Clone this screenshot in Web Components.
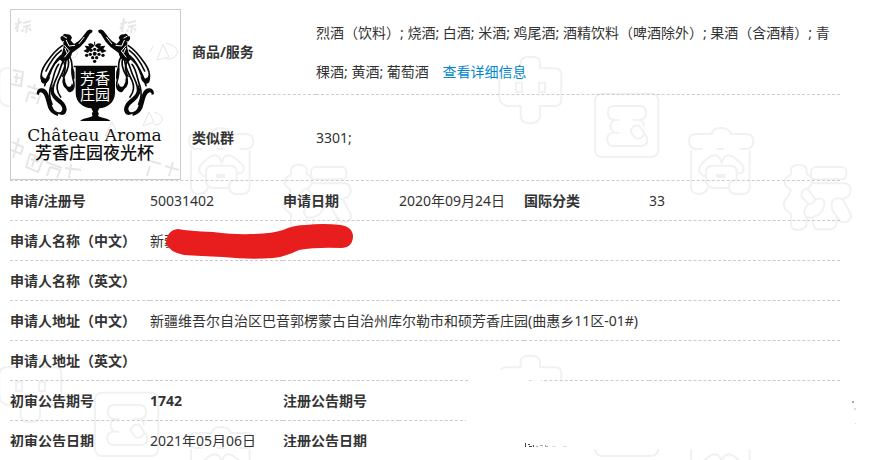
<!DOCTYPE html>
<html lang="zh-CN">
<head>
<meta charset="utf-8">
<title>商标详情</title>
<style>
body{
  margin:0;
  background:#fff;
  color:#333;
  font:14px/39px "Noto Sans","Noto Sans CJK SC",sans-serif;
}
</style>
</head>
<body>
<trademark-page>
  <mark-logo slot="logo"></mark-logo>
  <goods-table slot="goods">
    <span slot="goods">烈酒（饮料）; 烧酒; 白酒; 米酒; 鸡尾酒; 酒精饮料（啤酒除外）; 果酒（含酒精）; 青稞酒; 黄酒; 葡萄酒</span>
    <span slot="group">3301;</span>
  </goods-table>
  <detail-table slot="detail"></detail-table>
</trademark-page>

<script>
// page background: 中国商标 outlines repeated as a tile
window.customElements.define('water-mark', class extends HTMLElement {

  constructor(){
    super(); this.attachShadow({mode:'open'});
  }

  connectedCallback(){
    this.render();
  }

  render(){
    this.shadowRoot.innerHTML = `
    <style>
    :host{ display:block; position:absolute; inset:0; pointer-events:none; }
    svg{ display:block; width:100%; height:100%; }
    </style>
    <svg aria-hidden="true">
      <defs>
        <pattern id="tile" x="-10" y="0" width="500" height="299" patternUnits="userSpaceOnUse">
          <g transform="scale(.33333)" fill="none" stroke="#f1f1f1" stroke-width="6">
            <path d="M150 205H195Q214 205 214 224V300Q214 318 195 318H150V350Q148 370 120 370Q94 370 92 350V318H50Q28 310 28 290V225Q30 205 50 205H92V185Q94 170 120 170Q148 170 150 185Z"/>
            <path d="M78 248H96V276H78ZM147 248H165V276H147Z"/>
            <rect x="315" y="281" width="190" height="190" rx="20"/>
            <path d="M388 360H372Q354 358 354 340Q352 320 370 318H450Q468 318 468 340Q468 358 450 359H428M450 359Q462 365 462 380M370 360Q352 380 372 398H388M368 398Q350 402 352 420Q354 438 370 438H455Q472 435 472 420Q472 405 460 400"/>
            <path d="M430 380Q420 388 424 398L436 414Q446 420 458 410Q464 404 460 394L448 378Q440 374 430 380Z"/>
            <path d="M638 447H615Q597 442 597 424Q597 404 615 402H665Q668 384 693 384Q718 384 722 402H770Q790 404 790 424Q790 444 770 447H748M680 447H703"/>
            <path d="M603 450V560Q603 582 628 582Q650 580 654 562M779 450V560Q779 582 755 582H735Q717 578 717 560Q717 540 740 540"/>
            <path d="M695 490Q690 465 672 466Q655 468 630 498Q622 515 640 528H648M695 490Q700 465 718 466Q735 470 760 498Q764 515 752 520H740M715 564H670Q652 562 648 545V515Q650 497 668 497H722Q740 498 740 515V540M682 525H703V531H682Z"/>
            <path d="M903 525V510Q905 494 926 494Q948 494 950 510V522Q966 528 966 545Q964 560 950 566M903 525Q884 530 884 548Q886 562 902 568Q900 585 885 600Q876 620 890 632L903 642V675Q905 690 926 690Q948 688 950 672V650"/>
            <rect x="963" y="501" width="106" height="37" rx="14"/>
            <path d="M966 550H1065Q1082 552 1082 573Q1080 592 1060 595M940 570Q930 580 936 592L956 612Q972 612 976 598L956 570Q948 564 940 570ZM976 598Q1000 590 1004 608Q1000 635 985 645Q945 665 942 635Q945 620 956 612M968 655Q966 688 985 688H1020Q1038 686 1040 668V648"/>
            <path d="M1030 600Q1020 612 1028 632L1052 665Q1070 672 1082 655Q1086 645 1078 635L1060 600Q1045 590 1030 600Z"/>
          </g>
        </pattern>
      </defs>
      <rect width="100%" height="100%" fill="url(#tile)"/>
    </svg>
    `;
  }

});

window.customElements.define('mark-logo', class extends HTMLElement {

  constructor(){
    super(); this.attachShadow({mode:'open'});
  }

  connectedCallback(){
    this.render();
  }

  render(){
    this.shadowRoot.innerHTML = `
    <style>
    :host{
      display:block;
      position:relative;
      box-sizing:border-box;
      width:171px;
      height:171px;
      border:1px solid #ccc;
      background:#fff;
      color:#111;
      text-align:center;
    }
    .back{ position:absolute; inset:0; width:100%; height:100%; }
    figure{ position:relative; margin:0; padding:15px 2px 0 0; }
    .art{ display:block; margin:0 auto; }
    .name{ font:17px/20px "DejaVu Serif",serif; }
    .cn{ font:500 17px/18px "Liberation Sans","Noto Sans CJK SC",sans-serif; }
    .ink{ font-family:"Liberation Sans","Noto Sans CJK SC",sans-serif; }
    </style>
    <svg class="back" viewBox="0 0 169 169" aria-hidden="true">
      <g fill="none" stroke="#e6e6e6" stroke-width="2">
        <g id="bian">
          <path d="M4 14L11 12M8 8L6 22M7 15L4 19M12 13L20 11M12 17L20 15M16 16L15 23M12 19L11 22M18 18L20 21"/>
        </g>
        <use href="#bian" x="105"/>
        <path d="M2 60L12 62L10 76L0 74M3 67L10 68M6 63L5 73M16 76L32 81M24 74L23 78M18 82L15 92M18 82L29 85L26 94M20 87L25 88M1 132L12 137L10 144L0 140M8 128L2 148M19 144L32 149L27 162L15 157ZM20 149L28 152M24 147L21 157M35 152L51 158M39 157L36 166M39 157L49 160L46 168M54 158L70 160M60 154L58 168M136 150L150 154M139 156L136 166M154 156L168 160M162 152L158 166"/>
        <path d="M152 34L146 50L158 47ZM155 33Q169 37 166 44Q162 50 155 49M142 36L139 42M55 38L49 48M58 36Q68 39 66 45Q64 49 58 47M138 102L132 116L143 112ZM143 102Q153 105 151 111Q148 116 143 114M101 112L94 126L106 122Z" stroke-width="1"/>
      </g>
    </svg>
    <figure>
      <svg class="art" width="130" height="100" viewBox="0 0 130 100" role="img" aria-label="芳香庄园">
        <defs>
          <g id="dancer" stroke="#080808" stroke-linecap="round" stroke-linejoin="round">
            <g stroke="none">
              <path d="M92 43Q90 31 97 34Q101 23 110 28Q122 27 126 38L122 46L132 57Q146 51 154 40L171 18Q178 10 187 16Q189 23 180 26L165 50Q152 66 137 76L126 84Q124 98 112 106L98 112L88 102L97 82Q103 66 100 53Z"/>
              <path d="M32 152Q30 176 43 176Q57 174 61 152Q52 164 44 160Q37 158 36 150Z"/>
              <path d="M99 160Q94 182 108 191Q119 210 128 196Q134 186 126 174Q122 192 111 182Q104 174 105 160Z"/>
              <path d="M124 132Q124 145 128 158Q134 170 134 156Q135 140 128 124Z"/>
              <path d="M20 207Q20 192 33 190Q47 189 54 205Q60 218 64 235Q68 253 80 262Q87 267 84 273Q63 268 55 250Q51 237 47 222Q41 202 32 202Q26 203 27 210Z"/>
              <path d="M68 176Q66 203 86 218Q108 233 110 252Q110 268 96 270Q79 268 74 256Q84 265 93 260Q102 252 91 239Q62 219 60 196Z"/>
            </g>
            <g fill="none" stroke-width="5">
              <path d="M97 62C72 78 60 98 46 118C36 133 32 146 34 160"/>
              <path d="M93 92C74 108 68 124 60 146C54 160 47 170 40 168"/>
              <path d="M94 76C72 92 59 114 48 138"/>
              <path d="M92 98C64 122 52 150 44 182"/>
              <path d="M100 108C92 122 90 138 82 154C74 172 66 184 70 204"/>
              <path d="M108 106C106 130 96 146 86 166C78 184 80 200 92 216"/>
              <path d="M86 118C72 136 72 156 62 184C56 202 58 220 66 238"/>
              <path d="M114 102C120 118 112 136 104 150C100 160 99 172 104 182"/>
              <path d="M120 98C132 118 122 140 128 158C134 176 132 190 126 196"/>
              <path d="M102 112C108 126 106 140 98 154"/>
            </g>
            <g fill="none" stroke="#fff" stroke-width="3">
              <path d="M109 46L117 63L134 61M104 62L118 78L104 96M101 34L110 39M147 56L162 37M91 55L101 50M105 70L111 84"/>
            </g>
          </g>
        </defs>
        <g transform="scale(.33333)" fill="#080808">
          <use href="#dancer"/>
          <use href="#dancer" transform="translate(392 0) scale(-1 1)"/>
          <path d="M131 122H261V127H255V203C255 235 229 248 208 250L203 260Q209 265 204 272C210 278 232 278 242 288H150C160 278 182 278 188 272Q183 265 189 260L184 250C163 248 137 235 137 203V127H131Z"/>
          <path d="M194 66V50M194 62Q182 50 174 58L178 64L164 62L170 72L160 78L174 84L182 72ZM194 62Q206 50 214 58L210 64L226 62L220 72L230 78L216 84L206 72Z"/>
          <g>
            <circle cx="183" cy="76" r="5"/><circle cx="194" cy="73" r="5"/><circle cx="205" cy="76" r="5"/>
            <circle cx="170" cy="91" r="5"/><circle cx="181" cy="88" r="5"/><circle cx="194" cy="86" r="6"/><circle cx="207" cy="88" r="5"/><circle cx="219" cy="91" r="5"/>
            <circle cx="188" cy="98" r="5"/><circle cx="200" cy="98" r="5"/><circle cx="194" cy="109" r="5"/>
          </g>
          <path fill="none" stroke="#080808" stroke-width="3" d="M194 50V60"/>
        </g>
        <g class="ink" font-size="15" fill="#fff" text-anchor="middle">
          <text x="65" y="59">芳香</text>
          <text x="65" y="75">庄园</text>
        </g>
      </svg>
      <div class="name">Château Aroma</div>
      <div class="cn">芳香庄园夜光杯</div>
    </figure>
    `;
  }

});

window.customElements.define('goods-table', class extends HTMLElement {

  constructor(){
    super(); this.attachShadow({mode:'open'});
  }

  connectedCallback(){
    this.render();
  }

  render(){
    this.shadowRoot.innerHTML = `
    <style>
    :host{ display:block; }
    table{ width:100%; border-spacing:0; table-layout:fixed; }
    col:first-child{ width:124px; }
    th,td{ box-sizing:border-box; height:85px; padding:0; text-align:left; vertical-align:middle; }
    tr:first-child > *{ height:86px; border-bottom:1px dashed #ccc; }
    a{ margin-left:10px; color:#08c; text-decoration:none; }
    </style>
    <table>
      <colgroup><col><col></colgroup>
      <tr><th scope="row">商品/服务</th><td><slot name="goods"></slot> <a href="#detail">查看详细信息</a></td></tr>
      <tr><th scope="row">类似群</th><td><slot name="group"></slot></td></tr>
    </table>
    `;
  }

});

window.customElements.define('detail-table', class extends HTMLElement {

  constructor(){
    super(); this.attachShadow({mode:'open'});
    this.rows = [
      ["申请/注册号","50031402","申请日期","2020年09月24日","国际分类","33"],
      ["申请人名称（中文）","新疆","","","",""],
      ["申请人名称（英文）","","","","",""],
      ["申请人地址（中文）","新疆维吾尔自治区巴音郭楞蒙古自治州库尔勒市和硕芳香庄园(曲惠乡11区-01#)","","","",""],
      ["申请人地址（英文）","","","","",""],
      ["初审公告期号","<b>1742</b>","注册公告期号","","",""],
      ["初审公告日期","2021年05月06日","注册公告日期","","",""]
    ];
  }

  connectedCallback(){
    this.render();
  }

  cell(text, i){
    if(i % 2 == 0 && text) return `<th scope="row">${text}</th>`;
    return `<td>${text}</td>`;
  }

  render(){
    this.shadowRoot.innerHTML = `
    <style>
    :host{ display:block; }
    table{ width:100%; border-spacing:0; table-layout:fixed; }
    th,td{
      box-sizing:border-box;
      height:40px;
      padding:0;
      border-bottom:1px dashed #ccc;
      text-align:left;
      white-space:nowrap;
    }
    .a{ width:140px; }
    .b{ width:133px; }
    .c{ width:116px; }
    .d{ width:125px; }
    </style>
    <table>
      <colgroup><col class="a"><col class="b"><col class="c"><col class="d"><col class="d"><col></colgroup>
      ${this.rows.map(r => `<tr>${r.map(this.cell).join("")}</tr>`).join("")}
    </table>
    `;
  }

});

// freehand strokes drawn over the record
window.customElements.define('brush-layer', class extends HTMLElement {

  constructor(){
    super(); this.attachShadow({mode:'open'});
  }

  connectedCallback(){
    this.render();
  }

  render(){
    this.shadowRoot.innerHTML = `
    <style>
    :host{ display:block; position:absolute; left:0; top:0; pointer-events:none; }
    svg{ display:block; }
    </style>
    <svg width="894" height="460" aria-hidden="true">
      <path fill="#fff" d="M469 376Q484 368 506 370L530 381L538 379L545 382H860V449H466L466 400Z"/>
      <path fill="#e81e1e" d="M178 229Q188 231 213 232Q238 235 250 234Q272 234 283 230Q294 225 306 225Q322 223 341 225Q353 227 353 237Q352 248 341 248Q316 247 299 250Q285 257 273 258Q250 260 223 257Q200 256 184 255Q169 252 166 243Q167 230 178 229Z"/>
      <path fill="#444" d="M525 443h1v4h-1zM528 444h2v1h-2zM529 446h3v1h-3zM533 445h1v2h-1z"/>
      <path fill="#aaa" d="M536 446h2v1h-2zM540 445h3v1h-3zM546 446h2v1h-2zM852 401h2v2h-2zM545 445h1v2h-1z"/>
      <path fill="#ddd" d="M552 446h4v1h-4zM563 446h4v1h-4zM854 408h2v2h-2zM855 423h1v1h-1z"/>
    </svg>
    `;
  }

});

window.customElements.define('trademark-page', class extends HTMLElement {

  constructor(){
    super(); this.attachShadow({mode:'open'});
  }

  connectedCallback(){
    this.render();
  }

  render(){
    this.shadowRoot.innerHTML = `
    <style>
    :host{
      display:block;
      position:relative;
      box-sizing:border-box;
      min-height:100vh;
      padding:9px 54px 13px 10px;
      overflow:hidden;
    }
    main{ position:relative; max-height:calc(100vh - 22px); overflow:hidden; }
    .head{
      display:flex;
      gap:11px;
      height:171px;
      border-bottom:1px dashed #ccc;
    }
    ::slotted(mark-logo){ flex:none; }
    ::slotted(goods-table){ flex:1; }
    </style>
    <water-mark></water-mark>
    <main>
      <section class="head">
        <slot name="logo"></slot>
        <slot name="goods"></slot>
      </section>
      <slot name="detail"></slot>
    </main>
    <brush-layer></brush-layer>
    `;
  }

});
</script>
</body>
</html>
